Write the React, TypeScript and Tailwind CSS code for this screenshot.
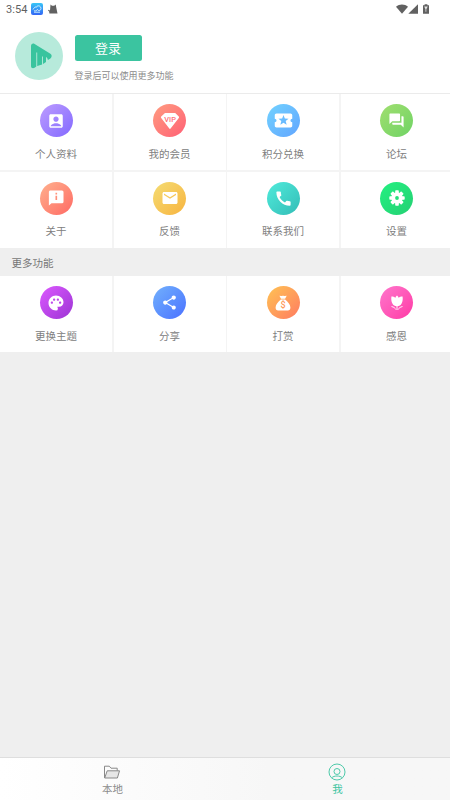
import type { ReactNode } from "react";
import {
  MdAccountBox,
  MdCall,
  MdEmail,
  MdForum,
  MdLocalActivity,
  MdPalette,
  MdShare,
} from "react-icons/md";

function VipIcon() {
  return (
    <svg className="w-5 h-[18px]" viewBox="0 0 20 18" aria-hidden>
      <path
        d="M5 1h10.2l3.6 3.6c.4.5.4 1 0 1.5L10.6 16.600c-.4.5-.9.5-1.3 0L1.2 6.1c-.4-.5-.4-1 0-1.5z"
        fill="#fff"
      />
      <text
        x="10.1"
        y="10.2"
        textAnchor="middle"
        fontSize="7.4"
        fontWeight="500"
        fill="#ff7079"
        fontFamily="Roboto, sans-serif"
        letterSpacing=".1"
      >
        VIP
      </text>
    </svg>
  );
}

function AboutIcon() {
  return (
    <svg className="w-[18px] h-[18px]" viewBox="0 0 24 24" fill="currentColor" aria-hidden>
      <path
        fillRule="evenodd"
        d="M4.500 2h15.500a2 2 0 0 1 2 2v13a2 2 0 0 1-2 2H6l-3.500 3V4c0-1.1.9-2 2-2zm6.800 7v5.500h2.200V9zm0-4v2.200h2.200V5z"
      />
    </svg>
  );
}

function GearIcon() {
  return (
    <svg className="w-4 h-4" viewBox="0 0 16 16" aria-hidden>
      <g fill="#fff">
        {[0, 45, 90, 135].map((a) => (
          <rect key={a} x="6.2" y=".3" width="3.6" height="15.4" rx=".8" transform={`rotate(${a} 8 8)`} />
        ))}
        <circle cx="8" cy="8" r="5.7" />
      </g>
      <circle cx="8" cy="8" r="1.900" fill="#24e07a" />
    </svg>
  );
}

function MoneyBagIcon() {
  return (
    <svg className="w-4 h-4" viewBox="0 0 16 16" aria-hidden>
      <path d="M4.4.8 6.4 1l1.6-.3L9.7 1l2-.2-1.6 3H6z" fill="#fff" />
      <path d="M5.9 4.6h4.2c2.7 2 5.300 5 5.300 8 0 2.100-.9 2.900-2.600 2.900H3.200C1.500 15.500.6 14.700.6 12.600c0-3 2.600-6 5.300-8z" fill="#fff" />
      <text
        x="8"
        y="13.3"
        textAnchor="middle"
        fontSize="9"
        fontWeight="500"
        fill="#ff985a"
        fontFamily="Roboto, sans-serif"
      >
        $
      </text>
    </svg>
  );
}

function TulipIcon() {
  return (
    <svg className="w-4 h-4" viewBox="0 0 16 16" aria-hidden>
      <path
        d="M8 .6c.8.600 1.300 1.300 1.600 2.200 1-.8 2.300-1.200 4-1.200.3 2.800.1 5.200-1 6.900-.9 1.800-2.300 2.700-4.600 2.700s-3.700-.9-4.600-2.700c-1.100-1.700-1.300-4.100-1-6.900 1.700 0 3 .4 4 1.200C6.700 1.900 7.200 1.200 8 .6z"
        fill="#fff"
      />
      <path
        d="M8 10v5M6.900 14.600c-.7-1.500-2-2.500-4.400-3.100M9.100 14.600c.7-1.500 2-2.500 4.400-3.100"
        fill="none"
        stroke="#fff"
        strokeWidth=".9"
      />
    </svg>
  );
}

type Item = { label: string; bg: string; icon: ReactNode };

const mainItems: Item[] = [
  { label: "个人资料", bg: "from-[#bd9bff] to-[#8468ff]", icon: <MdAccountBox size={18} /> },
  { label: "我的会员", bg: "from-[#ff9b80] to-[#ff5e75]", icon: <VipIcon /> },
  { label: "积分兑换", bg: "from-[#72d2ff] to-[#62a5ff]", icon: <MdLocalActivity size={21} /> },
  { label: "论坛", bg: "from-[#a0df70] to-[#6ed365]", icon: <MdForum size={17} /> },
  { label: "关于", bg: "from-[#ffb08e] to-[#ff6864]", icon: <AboutIcon /> },
  { label: "反馈", bg: "from-[#f4dc72] to-[#f7b43e]", icon: <MdEmail size={18} /> },
  { label: "联系我们", bg: "from-[#50ebdb] to-[#33bdb7]", icon: <MdCall size={19} /> },
  { label: "设置", bg: "from-[#23f181] to-[#25d073]", icon: <GearIcon /> },
];

const moreItems: Item[] = [
  { label: "更换主题", bg: "from-[#dc58ff] to-[#9d34d4]", icon: <MdPalette size={18} /> },
  { label: "分享", bg: "from-[#73b0fc] to-[#4c70ff]", icon: <MdShare size={17} /> },
  { label: "打赏", bg: "from-[#ffc252] to-[#ff7a60]", icon: <MoneyBagIcon /> },
  { label: "感恩", bg: "from-[#ff75cd] to-[#ff35a5]", icon: <TulipIcon /> },
];

function ItemGrid({ items }: { items: Item[] }) {
  return (
    <div className="grid grid-cols-[repeat(4,112px)] gap-x-[1.5px] gap-y-[1.5px] overflow-hidden bg-[#f4f4f4]">
      {items.map((item) => (
        <button
          key={item.label}
          className="h-[76px] w-[112px] bg-white flex flex-col items-center pt-[10px]"
        >
          <span
            className={`w-[33px] h-[33px] rounded-full bg-linear-to-br ${item.bg} text-white flex items-center justify-center`}
          >
            {item.icon}
          </span>
          <span className="mt-[8.8px] text-[10.5px] leading-4 text-[#808080]">{item.label}</span>
        </button>
      ))}
    </div>
  );
}

function StatusBar() {
  return (
    <div className="h-[18px] flex items-center pl-[6px] pr-5 text-[#616161]">
      <span className="text-[11px] leading-none tracking-[0.1px] font-[Roboto,sans-serif]">3:54</span>
      <svg className="ml-[3px] w-3 h-3" viewBox="0 0 12 12" aria-hidden>
        <defs>
          <linearGradient id="app" x1="0" y1="0" x2="0" y2="1">
            <stop offset="0" stopColor="#38c6f7" />
            <stop offset="1" stopColor="#3366f5" />
          </linearGradient>
        </defs>
        <rect width="12" height="12" rx="2" fill="url(#app)" />
        <path d="M2 6.500c1-2 2.500-3 4-2.500M3 7.800c2 .4 3-.2 3.600-1.800M6 3.200c2-1 4 .2 4 2.200S8 8 6.800 7.200M3 9.200h6" fill="none" stroke="#d9f5ff" strokeWidth=".9" />
      </svg>
      <svg className="ml-[5px] w-[10px] h-[10px]" viewBox="0 0 10 10" fill="currentColor" aria-hidden>
        <path d="M2.500.5 4 1.800h2.200L7.700.5 8.500 4.700 9.500 9.500H1.400L1.200 7.500 0 6.600l.5-.8 1.500.8z" />
      </svg>
      <div className="ml-auto flex items-center h-full">
        <svg className="w-3 h-[10px]" viewBox="0 0 12 10" fill="currentColor" aria-hidden>
          <path d="M0 2.700C3.400-.2 8.600-.2 12 2.700L6 9.800z" />
        </svg>
        <svg className="w-[10px] h-[10px]" viewBox="0 0 10 10" fill="currentColor" aria-hidden>
          <path d="M10 .2v9.600H.3z" />
        </svg>
        <svg className="ml-[5px] mr-[1px] w-[6px] h-[10px]" viewBox="0 0 6 10" aria-hidden>
          <path d="M0 1.300h1.600V.2h2.800v1.100H6v8.500H0z" fill="currentColor" />
          <path d="M1.200 2.600h3.600L3.300 5.200v2.600h-.8V5.200z" fill="#e4e4e4" />
        </svg>
      </div>
    </div>
  );
}

function Avatar() {
  return (
    <svg className="w-12 h-12 shrink-0" viewBox="0 0 48 48" aria-hidden>
      <circle cx="24" cy="24" r="24" fill="#b7eadb" />
      <path
        d="M16 14c0-2 1.800-3 3.600-2l15.800 9.800c1.700 1.100 1.700 3.500 0 4.600l-2.500 1.500c-.2-1.300-.8-2.200-1.900-2.800v5l-3 1.800V24.500h-.9v8.100l-4.900 1.300V20.500h-.9v14.100l-1.700 1.100c-1.800 1-3.600.2-3.600-1.800z"
        fill="#39c49e"
      />
    </svg>
  );
}

export default function App() {
  return (
    <div className="w-[450px] h-[800px] flex flex-col overflow-hidden bg-[#efefef] font-['Noto_Sans_CJK_SC',sans-serif]">
      <header className="h-[94px] shrink-0 bg-white border-b border-[#ebebeb]">
        <StatusBar />
        <div className="flex pl-[15px] pt-[14.4px]">
          <Avatar />
          <div className="ml-[11.5px] pt-[3px] flex flex-col items-start">
            <button className="w-[67px] h-[26px] rounded-[2.5px] bg-[#3bc4a0] text-white text-[13px] leading-[26px] text-center">
              登录
            </button>
            <p className="mt-[6.5px] text-[9px] leading-4 text-[#8c8c8c]">登录后可以使用更多功能</p>
          </div>
        </div>
      </header>

      <main className="flex-1">
        <ItemGrid items={mainItems} />
        <h2 className="h-[28.5px] pl-[11.5px] text-[10.5px] leading-[30px] text-[#777]">更多功能</h2>
        <ItemGrid items={moreItems} />
      </main>

      <nav className="h-[43px] shrink-0 grid grid-cols-2 border-t border-[#dedede] bg-linear-to-r from-white to-[#f7f7f7] to-60%">
        <button className="flex flex-col items-center pt-[6px] text-[#8c8c8c]">
          <svg className="mr-px w-[18px] h-4" viewBox="0 0 18 16" fill="none" stroke="#888" aria-hidden>
            <path d="M1.500 14V2.200h4.800l1.700 2h6.200v2.600" />
            <path d="M4.200 6.800h12.300L14.400 14H1.700z" fill="#e6e6e6" />
          </svg>
          <span className="mt-px text-[10.5px] leading-4">本地</span>
        </button>
        <button className="flex flex-col items-center pt-[6px] text-[#3bc4a0]">
          <svg className="mr-px w-[18px] h-4 overflow-visible" viewBox="0 0 18 16" fill="none" stroke="currentColor" strokeWidth=".9" aria-hidden>
            <circle cx="9" cy="8" r="8" />
            <circle cx="9" cy="7.500" r="3" />
            <path d="M3.800 13.800c2-2.400 8.400-2.400 10.400 0" />
          </svg>
          <span className="mt-px text-[10.5px] leading-4">我</span>
        </button>
      </nav>
    </div>
  );
}
